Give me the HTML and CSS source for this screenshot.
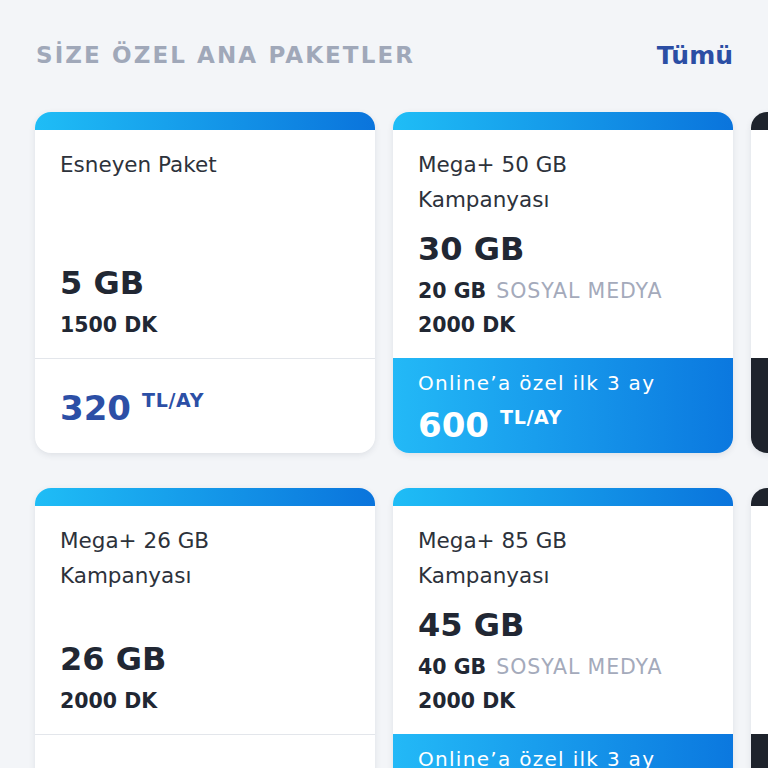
FILE: index.html
```html
<!DOCTYPE html>
<html lang="tr">
<head>
<meta charset="utf-8">
<title>Size Özel Ana Paketler</title>
<link rel="stylesheet" href="styles.css">
</head>
<body>
<section class="section">
  <header class="header">
    <h2 class="heading">SİZE ÖZEL ANA PAKETLER</h2>
    <a class="all" href="#">Tümü</a>
  </header>
  <div class="rows">
    <div class="row">
      <article class="card">
        <div class="bar"></div>
        <div class="body">
          <div class="title">Esneyen Paket</div>
          <div class="stats">
            <div class="big">5 GB</div>
            <div class="small first">1500 DK</div>
          </div>
        </div>
        <div class="footer">
          <div class="price"><span class="amount">320</span><span class="unit">TL/AY</span></div>
        </div>
      </article>
      <article class="card">
        <div class="bar"></div>
        <div class="body">
          <div class="title">Mega+ 50 GB<br>Kampanyası</div>
          <div class="stats">
            <div class="big">30 GB</div>
            <div class="small first">20 GB <span class="muted">SOSYAL MEDYA</span></div>
            <div class="small">2000 DK</div>
          </div>
        </div>
        <div class="footer promo">
          <div class="promo-text">Online’a özel ilk 3 ay</div>
          <div class="price"><span class="amount">600</span><span class="unit">TL/AY</span></div>
        </div>
      </article>
      <article class="card dark">
        <div class="bar"></div>
        <div class="body"></div>
        <div class="footer"></div>
      </article>
    </div>
    <div class="row">
      <article class="card">
        <div class="bar"></div>
        <div class="body">
          <div class="title">Mega+ 26 GB<br>Kampanyası</div>
          <div class="stats">
            <div class="big">26 GB</div>
            <div class="small first">2000 DK</div>
          </div>
        </div>
        <div class="footer"></div>
      </article>
      <article class="card">
        <div class="bar"></div>
        <div class="body">
          <div class="title">Mega+ 85 GB<br>Kampanyası</div>
          <div class="stats">
            <div class="big">45 GB</div>
            <div class="small first">40 GB <span class="muted">SOSYAL MEDYA</span></div>
            <div class="small">2000 DK</div>
          </div>
        </div>
        <div class="footer promo">
          <div class="promo-text">Online’a özel ilk 3 ay</div>
          <div class="price"><span class="amount">600</span><span class="unit">TL/AY</span></div>
        </div>
      </article>
      <article class="card dark">
        <div class="bar"></div>
        <div class="body"></div>
        <div class="footer"></div>
      </article>
    </div>
  </div>
</section>
</body>
</html>
```
FILE: styles.css
```css
* { box-sizing: border-box; }
html, body { margin: 0; padding: 0; }
body {
  background: #f3f5f8;
  font-family: "DejaVu Sans", "Open Sans", sans-serif;
  color: #2b303a;
  width: 768px;
  height: 768px;
  overflow: hidden;
}
.section {
  padding: 39px 0 0 35px;
}
.header {
  display: flex;
  justify-content: space-between;
  align-items: center;
  height: 32px;
  padding: 0 35px 0 1px;
  margin-bottom: 41px;
}
.heading {
  margin: 0;
  font-size: 23px;
  font-weight: 700;
  letter-spacing: 2.1px;
  color: #a0a8b9;
}
.all {
  font-size: 25px;
  font-weight: 700;
  color: #2b4ea4;
  text-decoration: none;
}
.rows {
  display: flex;
  flex-direction: column;
  gap: 35px;
}
.row {
  display: flex;
  gap: 18px;
}
.card {
  flex: none;
  width: 340px;
  height: 341px;
  background: #fff;
  border-radius: 16px;
  overflow: hidden;
  box-shadow: 0 2px 6px rgba(40, 50, 70, 0.10);
  display: flex;
  flex-direction: column;
}
.bar {
  height: 18px;
  background: linear-gradient(90deg, #1fbdf6, #0a74dc);
}
.body {
  height: 228px;
  padding: 17px 25px 16px;
  display: flex;
  flex-direction: column;
  justify-content: space-between;
}
.title {
  font-size: 21.5px;
  line-height: 35px;
  color: #2d323b;
}
.big {
  font-size: 32px;
  font-weight: 700;
  line-height: 42px;
  color: #212733;
}
.small {
  font-size: 20.5px;
  font-weight: 700;
  line-height: 34px;
  color: #212733;
}
.small.first { margin-top: 4px; }
.muted {
  font-weight: 400;
  font-size: 20.5px;
  letter-spacing: 0.9px;
  margin-left: 3px;
  color: #a4aabb;
}
.footer {
  flex: 1;
  border-top: 1px solid #e3e6eb;
  padding: 0 25px;
  display: flex;
  flex-direction: column;
  justify-content: center;
}
.price {
  display: flex;
  align-items: flex-start;
  gap: 11px;
  color: #2c4fa6;
  font-weight: 700;
}
.amount {
  font-size: 34px;
  line-height: 40px;
}
.unit {
  font-size: 19px;
  line-height: 24px;
  letter-spacing: 0.7px;
}
.footer:not(.promo) .price { margin-top: 4px; }
.promo {
  background: linear-gradient(90deg, #23b9f7, #0b78df);
  border-top: none;
  color: #fff;
  padding-top: 2px;
}
.promo .price { color: #fff; }
.promo-text {
  font-size: 20px;
  line-height: 30px;
  font-weight: 400;
  letter-spacing: 1.3px;
  margin-bottom: 7px;
}
.card.dark .bar { background: #1e232c; }
.card.dark .footer { background: #1e232c; border-top: none; }
```
